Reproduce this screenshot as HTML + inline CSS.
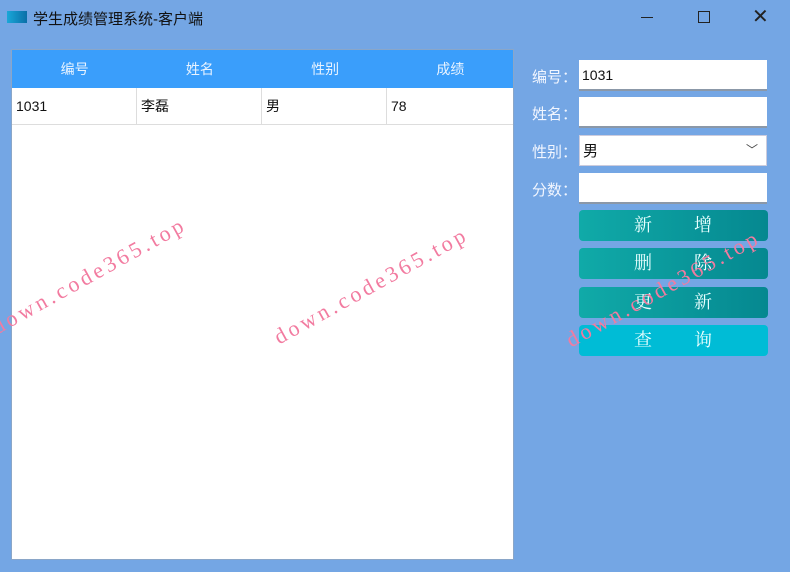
<!DOCTYPE html>
<html><head><meta charset="utf-8"><style>
body{margin:0;width:790px;height:572px;background:#74a6e4;position:relative;overflow:hidden;font-family:"Liberation Sans","Noto Sans CJK SC",sans-serif}
.a{position:absolute}
.title{left:33px;top:8px;font-size:15px;color:#111}
.icon{left:7px;top:11px;width:20px;height:12px;background:linear-gradient(90deg,#1aa7d8,#0a6fa8)}
.panel{left:11px;top:49px;width:501px;height:509px;background:#fff;border:1px solid #8aa6c8}
.hd{left:0;top:0;width:501px;height:38px;background:#3a9efb;display:flex;color:#e8f3ff;font-size:14px}
.hd div{flex:1;text-align:center;line-height:38px}
.row{left:0;top:38px;width:501px;height:36px;display:flex;border-bottom:1px solid #ddd;font-size:14px;color:#111}
.row div{width:125px;border-right:1px solid #ddd;line-height:36px;padding-left:4px;box-sizing:border-box}
.lbl{left:532px;font-size:15px;color:#f2f6ff}
.inp{left:579px;width:188px;height:31px;background:#fff;border-bottom:2px solid #8b98a8;box-sizing:border-box;font-size:14px;padding-left:3px;line-height:31px;color:#111}
.btn{left:579px;width:189px;height:31px;border-radius:4px;background:linear-gradient(90deg,#10aaa8,#058890);color:#e8ffff;font-family:"Liberation Serif","Noto Serif CJK SC",serif;font-size:18px;line-height:31px}
.btn span{position:absolute;top:0}
.wm{color:#f27ba0;font-family:"Liberation Serif","DejaVu Serif",serif;font-size:22px;letter-spacing:3.5px;transform:rotate(-29deg);transform-origin:left bottom;white-space:nowrap}
</style></head><body>
<div class="a icon"></div>
<div class="a title">学生成绩管理系统-客户端</div>
<div class="a" style="left:641px;top:17px;width:12px;height:1px;background:#222"></div>
<div class="a" style="left:698px;top:11px;width:12px;height:12px;border:1.5px solid #222;box-sizing:border-box"></div>
<div class="a" style="left:752px;top:4px;font-size:20px;color:#222">✕</div>
<div class="a panel">
<div class="a hd"><div>编号</div><div>姓名</div><div>性别</div><div>成绩</div></div>
<div class="a row"><div>1031</div><div>李磊</div><div>男</div><div style="border-right:none">78</div></div>
</div>
<div class="a lbl" style="top:66px">编号：</div>
<div class="a lbl" style="top:103px">姓名：</div>
<div class="a lbl" style="top:141px">性别：</div>
<div class="a lbl" style="top:179px">分数：</div>
<div class="a inp" style="top:60px">1031</div>
<div class="a inp" style="top:97px"></div>
<div class="a inp" style="top:135px;border:1px solid #ccd;font-size:15px">男<span style="position:absolute;right:8px;top:-1px;font-size:12px;color:#444">﹀</span></div>
<div class="a inp" style="top:173px"></div>
<div class="a btn" style="top:210px"><span style="left:55px">新</span><span style="left:115px">增</span></div>
<div class="a btn" style="top:248px"><span style="left:55px">删</span><span style="left:115px">除</span></div>
<div class="a btn" style="top:287px"><span style="left:55px">更</span><span style="left:115px">新</span></div>
<div class="a btn" style="top:325px;background:#00bcd6"><span style="left:55px">查</span><span style="left:115px">询</span></div>
<div class="a wm" style="left:0px;top:314px">down.code365.top</div>
<div class="a wm" style="left:282px;top:324px">down.code365.top</div>
<div class="a wm" style="left:574px;top:327px">down.code365.top</div>
</body></html>
